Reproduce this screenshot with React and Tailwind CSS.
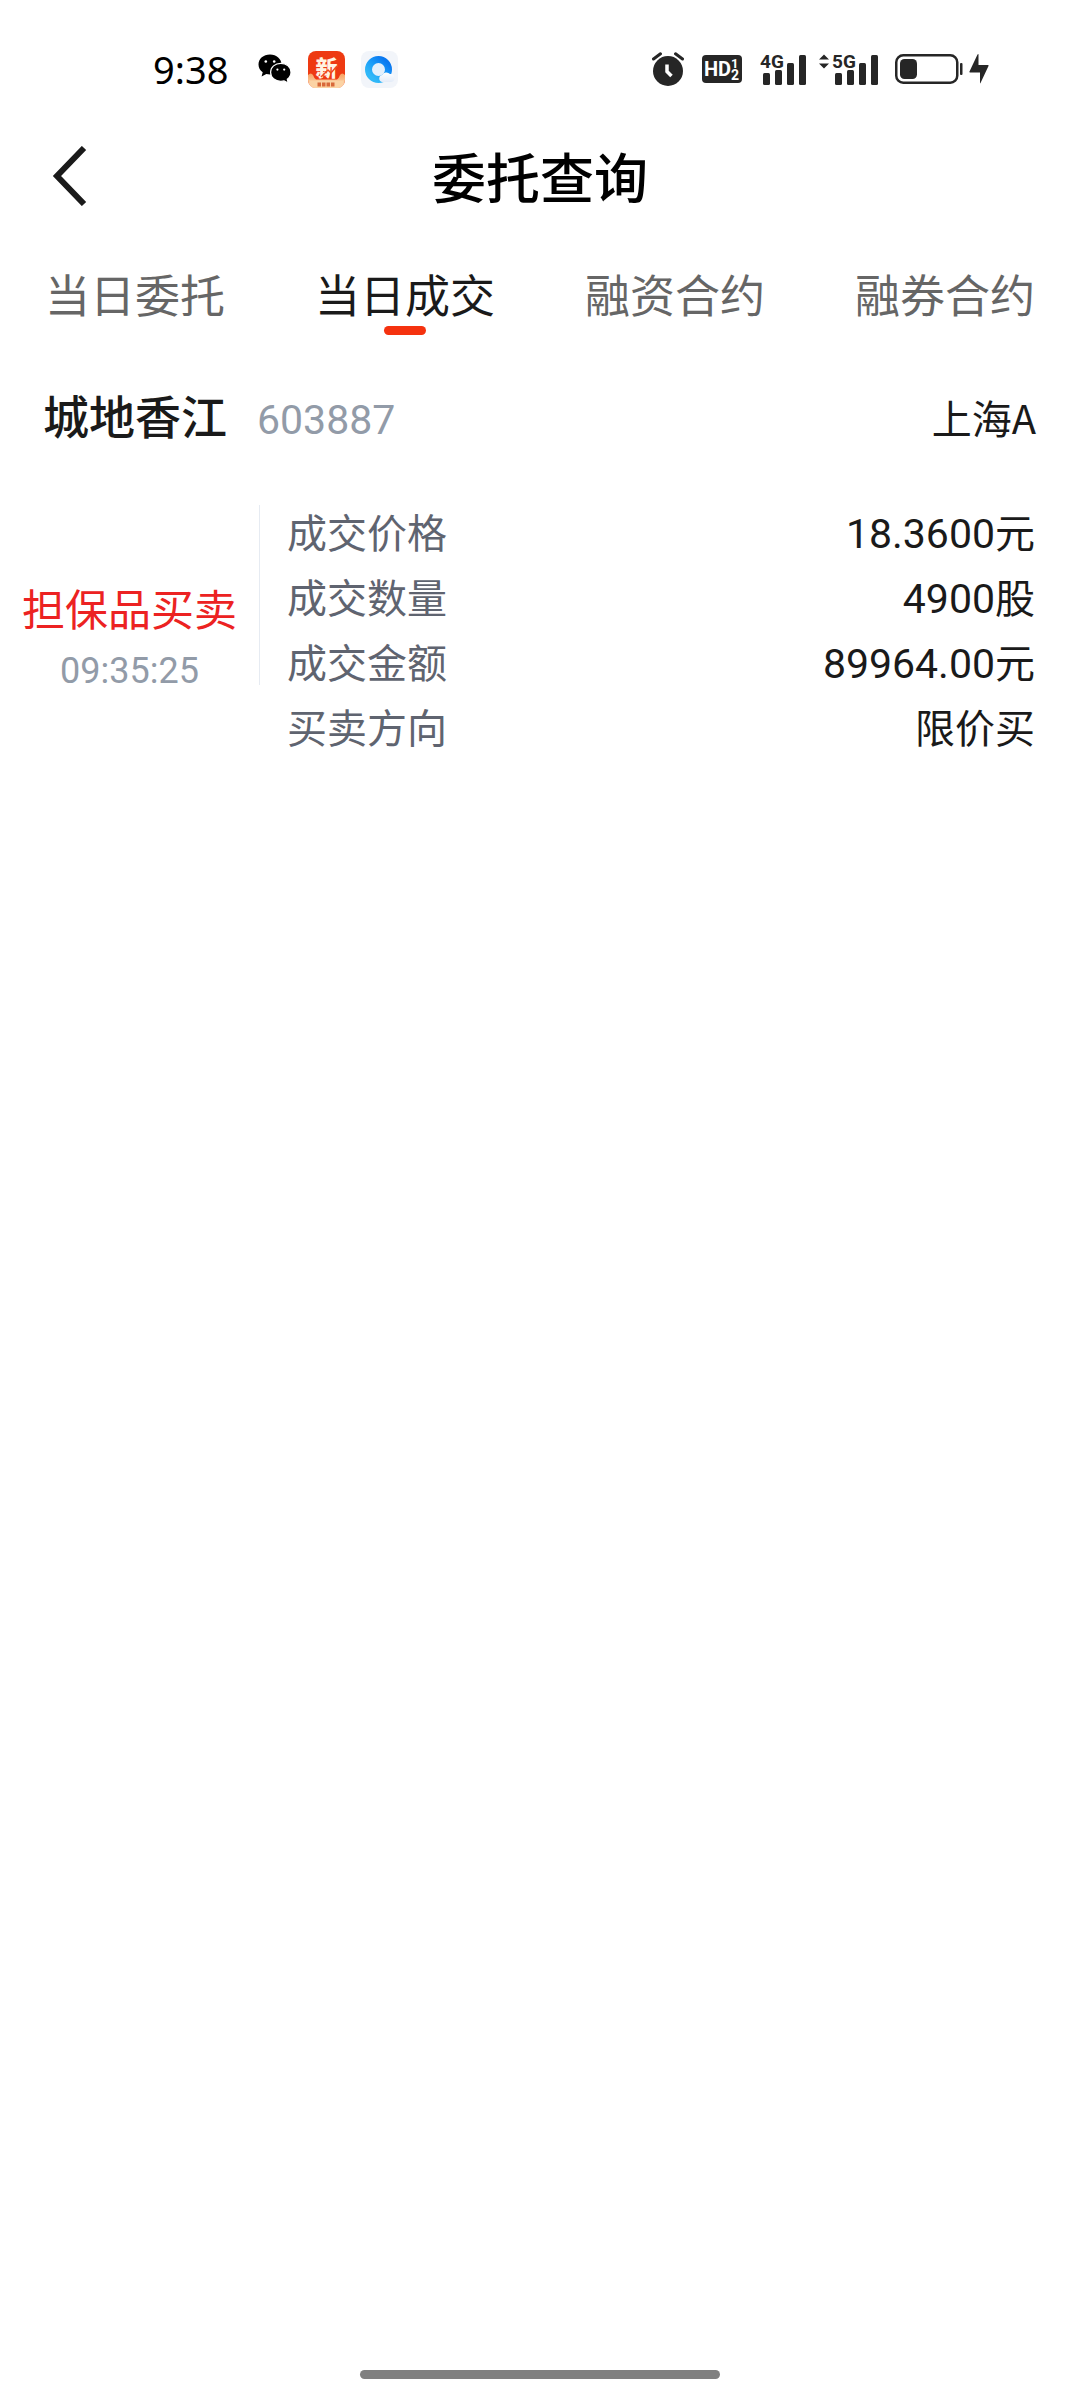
const TABS = ['当日委托', '当日成交', '融资合约', '融券合约']
const ACTIVE_TAB = '当日成交'

const DEAL = {
  name: '城地香江',
  code: '603887',
  market: '上海A',
  type: '担保品买卖',
  time: '09:35:25',
  rows: [
    { label: '成交价格', num: '18.3600', unit: '元' },
    { label: '成交数量', num: '4900', unit: '股' },
    { label: '成交金额', num: '89964.00', unit: '元' },
    { label: '买卖方向', num: '', unit: '限价买' },
  ],
}

function WechatIcon() {
  return (
    <svg width="34" height="30" viewBox="0 0 34 30" aria-hidden="true">
      <path d="M12 0.500C5.400 0.500 0.500 4.800 0.500 10.500c0 3.300 1.600 6 4.200 7.800L3.600 22.400l4.700-2.300c1.200 0.300 2.400 0.500 3.700 0.500 6.600 0 11.500-4.300 11.500-10S18.600 0.500 12 0.500Z" fill="#000" />
      <path d="M22.800 9.300c5.800 0 10.200 3.900 10.200 9 0 2.900-1.400 5.300-3.700 7l0.900 3.700-4.100-2.100c-1 0.300-2.100 0.400-3.300 0.400-5.800 0-10.200-3.900-10.200-9s4.400-9 10.200-9Z" fill="#000" stroke="#fff" strokeWidth="1.200" />
      <circle cx="7.800" cy="7.500" r="1.300" fill="#fff" />
      <circle cx="16.200" cy="7.500" r="1.300" fill="#fff" />
      <circle cx="19.400" cy="15.600" r="1.100" fill="#fff" />
      <circle cx="26.200" cy="15.600" r="1.100" fill="#fff" />
    </svg>
  )
}

function NewsIcon() {
  return (
    <svg width="37" height="37" viewBox="0 0 37 37" aria-hidden="true">
      <defs>
        <clipPath id="news-clip"><rect width="37" height="37" rx="8" /></clipPath>
        <linearGradient id="news-base" x1="0" y1="0" x2="0" y2="1">
          <stop offset="0" stopColor="#f8a060" />
          <stop offset="1" stopColor="#fde3c0" />
        </linearGradient>
      </defs>
      <g clipPath="url(#news-clip)">
        <rect width="37" height="37" fill="#ee3a12" />
        <path d="M0 24q3-3 5 0 1 3 3 4.500h21q2-1.500 3-4.500 2-3 5 0v13H0Z" fill="url(#news-base)" />
        <path d="M1 29.500h35l-3 8H4Z" fill="#fbd3a4" />
        <text x="18.500" y="25" textAnchor="middle" fontSize="22" fontWeight="900" fill="#fff3e2" fontFamily="'Noto Sans CJK SC', sans-serif">新</text>
        <path d="m13 26 7-7 3 3 6-7" fill="none" stroke="#f04a1c" strokeWidth="1.500" />
        <path d="M9.500 33.500h18" stroke="#d8683a" strokeWidth="4" strokeDasharray="3.500 1" />
      </g>
    </svg>
  )
}

function BrowserIcon() {
  return (
    <svg width="37" height="37" viewBox="0 0 37 37" aria-hidden="true">
      <defs>
        <linearGradient id="ring" x1="0.900" y1="0.100" x2="0.200" y2="0.900">
          <stop offset="0" stopColor="#0a78f0" />
          <stop offset="0.500" stopColor="#1a9cf8" />
          <stop offset="1" stopColor="#30b8f8" />
        </linearGradient>
        <linearGradient id="cloud" x1="0" y1="0" x2="0" y2="1">
          <stop offset="0" stopColor="#ffffff" />
          <stop offset="1" stopColor="#e4ecf8" />
        </linearGradient>
      </defs>
      <rect width="37" height="37" rx="8" fill="#f2f5fa" />
      <circle cx="17.500" cy="18.500" r="10" fill="#e4f0fc" stroke="url(#ring)" strokeWidth="7" />
      <path d="M21 31a3.600 3.600 0 0 1 0-7 5 5 0 0 1 8-1 4 4 0 1 1 1 8Z" fill="url(#cloud)" />
    </svg>
  )
}

function AlarmIcon() {
  return (
    <svg width="32" height="34" viewBox="0 0 32 34" aria-hidden="true">
      <circle cx="16" cy="19" r="15" fill="#262626" />
      <path d="m1.500 7 7-5.200M30.500 7l-7-5.200" stroke="#262626" strokeWidth="3" strokeLinecap="round" />
      <path d="M15 12.500v7l4.500 4.500" fill="none" stroke="#fff" strokeWidth="3.500" />
    </svg>
  )
}

function HdIcon() {
  return (
    <svg width="40" height="28" viewBox="0 0 40 28" aria-hidden="true">
      <rect width="40" height="28" rx="4" fill="#262626" />
      <g fill="#fff" fontWeight="700" fontFamily="Roboto, sans-serif">
        <text x="2" y="21" fontSize="20">HD</text>
        <text x="29" y="13" fontSize="13">1</text>
        <text x="29" y="25" fontSize="14">2</text>
      </g>
    </svg>
  )
}

function SignalIcon({ label, arrows }) {
  return (
    <svg width={arrows ? 61 : 47} height="41" viewBox={arrows ? '-14 -4 61 41' : '0 -4 47 41'} aria-hidden="true">
      {arrows && <path d="m-13 6.500 5-5 5 5ZM-13 10.500l5 5 5-5Z" fill="#262626" />}
      <text x="0" y="15" fontSize="19" fontWeight="700" fill="#262626" fontFamily="Roboto, sans-serif">{label}</text>
      <g fill="#262626">
        <rect x="3" y="20" width="7" height="12" rx="1.500" />
        <rect x="15" y="17" width="7" height="15" rx="1.500" />
        <rect x="27" y="10" width="7" height="22" rx="1.500" />
        <rect x="39" y="2" width="7" height="30" rx="1.500" />
      </g>
    </svg>
  )
}

function BatteryIcon() {
  return (
    <svg width="68" height="30" viewBox="0 0 68 30" aria-hidden="true">
      <rect x="1.250" y="1.250" width="61" height="27.500" rx="7" fill="none" stroke="#262626" strokeWidth="2.500" />
      <rect x="5" y="5" width="17" height="20" rx="4.500" fill="#262626" />
      <rect x="65" y="9" width="2.500" height="12" rx="1" fill="#262626" />
    </svg>
  )
}

function BoltIcon() {
  return (
    <svg width="20" height="30" viewBox="0 0 20 30" aria-hidden="true">
      <path d="M9.500 0.500v10.500h9.500q1 0 0.500 1L11.500 29q-0.500 1-0.500-0.500V18.500H1q-1 0-0.500-1L8.500 0.500q1-1 1 0Z" fill="#262626" />
    </svg>
  )
}

function StatusBar() {
  return (
    <div className="flex items-center justify-between h-[100px] pt-[38px] pl-[153px] pr-[91px]">
      <div className="flex items-center">
        <span className="text-[38px] leading-9 text-black font-['Noto_Sans',sans-serif]">9:38</span>
        <div className="flex items-center gap-4 ml-[30px]">
          <WechatIcon />
          <NewsIcon />
          <BrowserIcon />
        </div>
      </div>
      <div className="flex items-center">
        <AlarmIcon />
        <div className="flex items-center gap-[18px] ml-[18px]">
          <HdIcon />
          <SignalIcon label="4G" />
        </div>
        <div className="flex items-center gap-4 ml-[11px]">
          <SignalIcon label="5G" arrows />
          <BatteryIcon />
        </div>
        <div className="ml-[6px]">
          <BoltIcon />
        </div>
      </div>
    </div>
  )
}

export default function App() {
  return (
    <div className="min-h-screen flex flex-col bg-white text-[#1a1a1a] font-['Noto_Sans_CJK_SC',sans-serif]">
      <StatusBar />

      {/* Title bar */}
      <header className="grid grid-cols-[1fr_auto_1fr] items-center h-[152px]">
        <button type="button" aria-label="返回" className="justify-self-start pl-[52px]">
          <svg width="36" height="60" viewBox="0 0 36 60" fill="none" aria-hidden="true">
            <path d="M32 2 5 30l27 28" stroke="#1a1a1a" strokeWidth="6" />
          </svg>
        </button>
        <h1 className="text-[54px] leading-[60px] font-medium text-black">委托查询</h1>
      </header>

      {/* Tabs */}
      <nav className="grid grid-cols-4" role="tablist">
        {TABS.map((tab) => {
          const active = tab === ACTIVE_TAB
          return (
            <button
              key={tab}
              type="button"
              role="tab"
              aria-selected={active}
              className={`flex flex-col items-center text-[45px] leading-[60px] pt-3 ${active ? 'text-[#1a1a1a]' : 'text-[#666666]'}`}
            >
              {tab}
              <span className={`w-[42px] h-[9px] mt-[2px] rounded-full ${active ? 'bg-[#f5320f]' : 'bg-transparent'}`} />
            </button>
          )
        })}
      </nav>

      <main>
        {/* Stock */}
        <div className="flex items-center justify-between h-[60px] mt-[52px] pl-[43px] pr-11">
          <div className="flex items-baseline gap-[30px]">
            <h2 className="text-[46px] leading-[60px] font-medium">{DEAL.name}</h2>
            <span className="text-[41px] leading-[60px] text-[#929ba8] font-[Roboto,sans-serif]">{DEAL.code}</span>
          </div>
          <span className="text-[40px] leading-[60px]">{DEAL.market}</span>
        </div>

        {/* Deal details */}
        <div className="flex mt-[52px] pr-[45px]">
          <div className="flex flex-col items-center gap-1 w-[259px] pt-[78px] shrink-0">
            <span className="text-[43px] leading-[60px] text-[#ec2222]">{DEAL.type}</span>
            <time className="text-[36px] leading-[60px] text-[#929ba8] font-[Roboto,sans-serif]">{DEAL.time}</time>
          </div>
          <div className="w-px h-[180px] mt-[6px] bg-[#e6ebf2]" />
          <dl className="flex-1 ml-[27px]">
            {DEAL.rows.map(({ label, num, unit }) => (
              <div key={label} className="flex items-baseline justify-between h-[65px] text-[40px] leading-[65px]">
                <dt className="text-[#5f6470]">{label}</dt>
                <dd>
                  {num && <span className="text-[41px] font-[Roboto,sans-serif]">{num}</span>}
                  {unit}
                </dd>
              </div>
            ))}
          </dl>
        </div>
      </main>

      {/* Home indicator */}
      <div className="w-1/3 h-[9px] mt-auto mb-[21px] mx-auto rounded-full bg-[#808080]" />
    </div>
  )
}
